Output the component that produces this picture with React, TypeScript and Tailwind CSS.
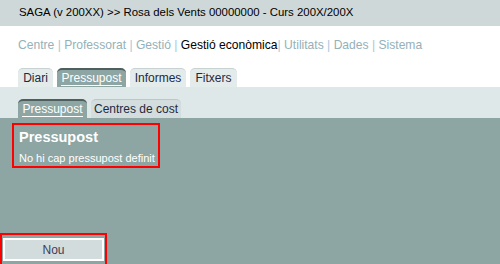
import React from "react";

const font = { fontFamily: '"Liberation Sans", Arial, sans-serif' };

function Tab({ label, active, w, sub }: { label: string; active?: boolean; w: string; sub?: boolean }) {
  return active ? (
    <div className={`${w} h-[19px] flex items-center justify-center rounded-t-[5px] bg-[#8da6a3] border-t-2 border-[#4f5f5e] text-white text-[12px] leading-none`}>
      <span className="border-b border-white pb-[1px]">{label}</span>
    </div>
  ) : (
    <div className={`${w} h-[19px] flex items-center justify-center rounded-t-[5px] ${sub ? "bg-[#d3dddd] border-[#bcc8c8]" : "bg-[#e3ebeb] border-[#c8d2d2]"} border-t text-[#1e2a40] text-[12px] leading-none`}>
      <span>{label}</span>
    </div>
  );
}

export default function App() {
  return (
    <div className="w-[500px] h-[264px] overflow-hidden flex flex-col bg-[#8da6a3]" style={font}>
      <div className="h-[26px] bg-[#cfd8d8] flex items-center pl-[19px] text-[11.4px] text-black shrink-0 whitespace-nowrap">
        SAGA (v 200XX) &gt;&gt; Rosa dels Vents 00000000 - Curs 200X/200X
      </div>
      <div className="h-[42px] bg-white pl-[18px] pt-[10px] text-[12.1px] text-[#94b1b9] shrink-0 whitespace-nowrap">
        Centre <span className="text-[#a9c8d8]">|</span> Professorat <span className="text-[#a9c8d8]">|</span> Gestió <span className="text-[#a9c8d8]">|</span>{" "}
        <span className="text-black">Gestió econòmica</span><span className="text-[#a9c8d8]">|</span> Utilitats <span className="text-[#a9c8d8]">|</span> Dades <span className="text-[#a9c8d8]">|</span> Sistema
      </div>
      <div className="bg-white pl-[18px] flex items-end gap-[4px] shrink-0">
        <Tab label="Diari" w="w-[35px]" />
        <Tab label="Pressupost" active w="w-[69px]" />
        <Tab label="Informes" w="w-[56px]" />
        <Tab label="Fitxers" w="w-[47px]" />
      </div>
      <div className="h-[31px] bg-[#dfe8e8] pl-[18px] flex items-end gap-[4px] shrink-0">
        <Tab label="Pressupost" active w="w-[69px]" />
        <Tab label="Centres de cost" w="w-[90px]" sub />
      </div>
      <div className="flex-1 flex flex-col justify-between pt-[5px]">
        <div className="ml-[12px] w-[148px] h-[45px] border-2 border-[#ff0000] px-[5px] pt-[3px] text-white whitespace-nowrap">
          <div className="text-[14.5px] font-bold leading-[18px]">Pressupost</div>
          <div className="text-[11px] leading-[14px] mt-[5px]">No hi cap pressupost definit</div>
        </div>
        <div className="w-[107px] h-[31px] border-2 border-[#ff0000] border-b-0 pt-[3px] pl-[1px]">
          <div className="w-[101px] h-[23px] bg-[#d3dcdc] border-2 border-white flex items-center justify-center text-[12px] text-[#3b3d5a]">
            Nou
          </div>
        </div>
      </div>
    </div>
  );
}
